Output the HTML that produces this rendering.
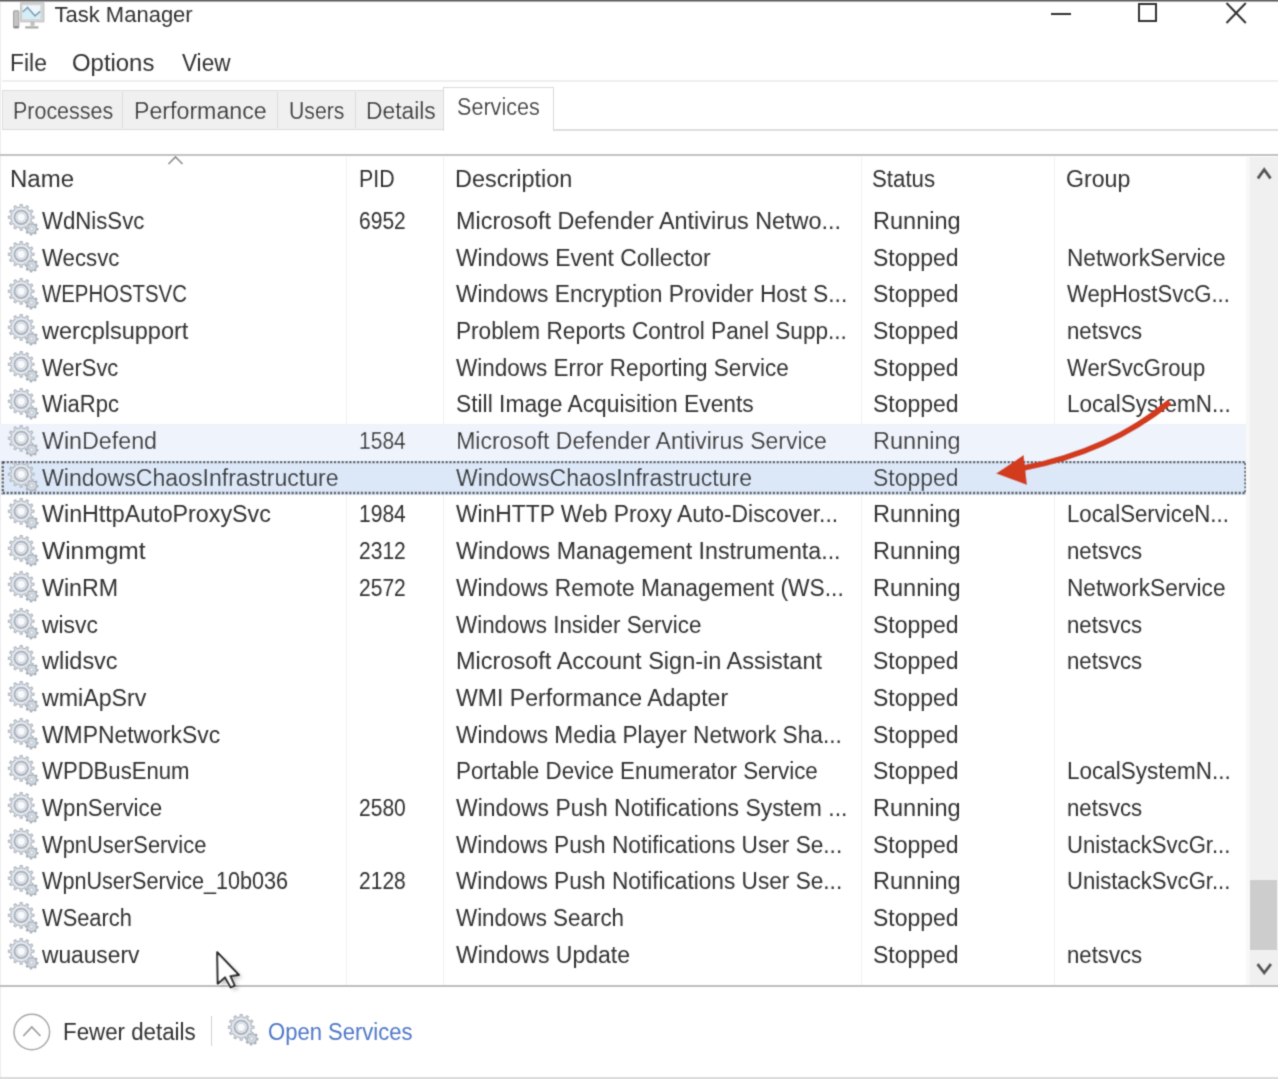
<!DOCTYPE html><html><head><meta charset='utf-8'><style>
*{margin:0;padding:0;box-sizing:border-box}
html,body{width:1278px;height:1079px;overflow:hidden;background:#fff}
body{position:relative;font-family:"Liberation Sans",sans-serif;font-size:22px;color:#1f1f1f}
.t{position:absolute;white-space:nowrap;line-height:23px;font-size:23px;transform-origin:0 0;color:#303030}
.blue{color:#4f77c6}
.abs{position:absolute}
.gear{position:absolute}
</style></head><body><div id="root" style="position:absolute;left:0;top:0;width:1278px;height:1079px;filter:url(#soft)">
<div class="abs" style="left:0;top:0;width:1278px;height:1px;background:#585858"></div>
<div class="abs" style="left:0;top:1px;width:1278px;height:1px;background:#a5a5a5"></div>
<div class="abs" style="left:0;top:2px;width:1.2px;height:1077px;background:#ededed"></div>
<svg class="abs" style="left:8px;top:0" width="40" height="32" viewBox="0 0 40 32">
<rect x="5.6" y="10.8" width="5.2" height="17.2" rx="0.6" fill="#c4c4c4" stroke="#9c9c9c" stroke-width="1"/>
<rect x="6.2" y="26" width="4.2" height="2" fill="#8a8a8a"/>
<rect x="12.7" y="2.8" width="23.2" height="19" fill="#d6d6d6" stroke="#bdbdbd" stroke-width="1"/>
<rect x="14.7" y="5.3" width="17.6" height="13.5" fill="#eef8fc"/>
<path d="M14.7,12 L19.5,7.4 L27,15.8 L32.2,11.4 L32.2,18.8 L14.7,18.8Z" fill="#d3eef8"/>
<path d="M14.7,12 L19.5,7.4 L27,15.8 L32.2,11.4" fill="none" stroke="#7d9db3" stroke-width="1.6"/>
<rect x="22.5" y="21.8" width="4" height="4" fill="#bdbdbd"/>
<rect x="17.2" y="26.3" width="13.2" height="2.2" fill="#a9a9a9"/>
</svg>
<div class="abs" style="left:1051px;top:13px;width:19.5px;height:2.2px;background:#333"></div>
<div class="abs" style="left:1138px;top:3.4px;width:19.3px;height:18.5px;border:2.2px solid #333"></div>
<svg class="abs" style="left:1224px;top:1px" width="24" height="24" viewBox="0 0 24 24"><path d="M2.5,2 L21.8,22 M21.8,2 L2.5,22" stroke="#333" stroke-width="2"/></svg>
<div class="abs" style="left:2px;top:80px;width:1276px;height:2px;background:#efefef"></div>
<div class="abs" style="left:553px;top:129px;width:725px;height:1.5px;background:#dedede"></div>
<div class="abs" style="left:2px;top:90px;width:442px;height:40px;background:#f0f0f0;border-top:1px solid #dedede;border-bottom:1px solid #dadada;border-left:1px solid #dedede"></div>
<div class="abs" style="left:122px;top:92px;width:1px;height:36px;background:#dcdcdc"></div>
<div class="abs" style="left:277px;top:92px;width:1px;height:36px;background:#dcdcdc"></div>
<div class="abs" style="left:355px;top:92px;width:1px;height:36px;background:#dcdcdc"></div>
<div class="abs" style="left:443px;top:87px;width:111px;height:44px;background:#fff;border:1px solid #d9d9d9;border-bottom:none"></div>
<div class="abs" style="left:0;top:153.6px;width:1278px;height:2.6px;background:#c2c2c2"></div>
<svg class="abs" style="left:166px;top:154px" width="20" height="12" viewBox="0 0 20 12"><path d="M2.5,10 L9.5,3 L16.5,10" fill="none" stroke="#8c8c8c" stroke-width="1.6"/></svg>
<div class="abs" style="left:346px;top:157px;width:1px;height:828px;background:#f1f1f1"></div>
<div class="abs" style="left:443px;top:157px;width:1px;height:828px;background:#f1f1f1"></div>
<div class="abs" style="left:861px;top:157px;width:1px;height:828px;background:#f1f1f1"></div>
<div class="abs" style="left:1054px;top:157px;width:1px;height:828px;background:#f1f1f1"></div>
<div class="abs" style="left:0;top:424.0px;width:1246px;height:36.7px;background:#eff3fb"></div>
<div class="abs" style="left:1px;top:460.5px;width:1245px;height:34px;background:#dce8f8"></div>
<svg class="abs" style="left:0;top:0" width="1278" height="1079"><rect x="2.8" y="462.2" width="1242.7" height="30.8" fill="none" stroke="#4d4f55" stroke-width="2.3" stroke-dasharray="2.2 1.65"/></svg>
<div class="abs" style="left:1246px;top:156.5px;width:4px;height:828px;background:#f8f8f8"></div>
<div class="abs" style="left:1250px;top:156.5px;width:28px;height:828px;background:#f0f0f0"></div>
<div class="abs" style="left:1250px;top:880px;width:27px;height:70px;background:#cdcdcd"></div>
<svg class="abs" style="left:1254px;top:164px" width="20" height="18" viewBox="0 0 20 18"><path d="M3.8,14.5 L10.2,5.6 L16.6,14.5" fill="none" stroke="#555" stroke-width="3"/></svg>
<svg class="abs" style="left:1254px;top:958px" width="20" height="18" viewBox="0 0 20 18"><path d="M3.5,6 L10.2,14.8 L17,6" fill="none" stroke="#555" stroke-width="3"/></svg>
<div class="abs" style="left:0;top:984.5px;width:1278px;height:2px;background:#bdbdbd"></div>
<svg class="gear" style="left:6px;top:204.3px" width="34" height="34" viewBox="0 0 34 34"><path d="M30.20,23.22 L30.39,24.29 L31.90,24.54 L31.76,25.91 L30.23,25.86 L29.83,26.87 L29.21,27.77 L30.10,29.01 L29.03,29.89 L27.99,28.76 L26.98,29.20 L25.91,29.39 L25.66,30.90 L24.29,30.76 L24.34,29.23 L23.33,28.83 L22.43,28.21 L21.19,29.10 L20.31,28.03 L21.44,26.99 L21.00,25.98 L20.81,24.91 L19.30,24.66 L19.44,23.29 L20.97,23.34 L21.37,22.33 L21.99,21.43 L21.10,20.19 L22.17,19.31 L23.21,20.44 L24.22,20.00 L25.29,19.81 L25.54,18.30 L26.91,18.44 L26.86,19.97 L27.87,20.37 L28.77,20.99 L30.01,20.10 L30.89,21.17 L29.76,22.21Z" fill="#d6dbe2" stroke="#a5adb7" stroke-width="1.2"/><circle cx="25.6" cy="24.6" r="1.8" fill="#f1f3f6" stroke="#b3bac3" stroke-width="0.8"/><path d="M25.15,10.63 L25.44,12.17 L27.97,12.36 L27.97,14.24 L25.44,14.43 L25.15,15.97 L24.63,17.44 L26.72,18.87 L25.79,20.49 L23.50,19.40 L22.48,20.58 L21.30,21.60 L22.39,23.89 L20.77,24.82 L19.34,22.73 L17.87,23.25 L16.33,23.54 L16.14,26.07 L14.26,26.07 L14.07,23.54 L12.53,23.25 L11.06,22.73 L9.63,24.82 L8.01,23.89 L9.10,21.60 L7.92,20.58 L6.90,19.40 L4.61,20.49 L3.68,18.87 L5.77,17.44 L5.25,15.97 L4.96,14.43 L2.43,14.24 L2.43,12.36 L4.96,12.17 L5.25,10.63 L5.77,9.16 L3.68,7.73 L4.61,6.11 L6.90,7.20 L7.92,6.02 L9.10,5.00 L8.01,2.71 L9.63,1.78 L11.06,3.87 L12.53,3.35 L14.07,3.06 L14.26,0.53 L16.14,0.53 L16.33,3.06 L17.87,3.35 L19.34,3.87 L20.77,1.78 L22.39,2.71 L21.30,5.00 L22.48,6.02 L23.50,7.20 L25.79,6.11 L26.72,7.73 L24.63,9.16Z" fill="#e3e7ed" stroke="#b0b7c1" stroke-width="1.2"/><circle cx="15.2" cy="13.3" r="6.7" fill="#eaedf2" stroke="#a7afba" stroke-width="1.9"/><circle cx="15.2" cy="13.3" r="4.2" fill="#f8fafd" stroke="#c0c6cf" stroke-width="0.8"/></svg>
<svg class="gear" style="left:6px;top:241.0px" width="34" height="34" viewBox="0 0 34 34"><path d="M30.20,23.22 L30.39,24.29 L31.90,24.54 L31.76,25.91 L30.23,25.86 L29.83,26.87 L29.21,27.77 L30.10,29.01 L29.03,29.89 L27.99,28.76 L26.98,29.20 L25.91,29.39 L25.66,30.90 L24.29,30.76 L24.34,29.23 L23.33,28.83 L22.43,28.21 L21.19,29.10 L20.31,28.03 L21.44,26.99 L21.00,25.98 L20.81,24.91 L19.30,24.66 L19.44,23.29 L20.97,23.34 L21.37,22.33 L21.99,21.43 L21.10,20.19 L22.17,19.31 L23.21,20.44 L24.22,20.00 L25.29,19.81 L25.54,18.30 L26.91,18.44 L26.86,19.97 L27.87,20.37 L28.77,20.99 L30.01,20.10 L30.89,21.17 L29.76,22.21Z" fill="#d6dbe2" stroke="#a5adb7" stroke-width="1.2"/><circle cx="25.6" cy="24.6" r="1.8" fill="#f1f3f6" stroke="#b3bac3" stroke-width="0.8"/><path d="M25.15,10.63 L25.44,12.17 L27.97,12.36 L27.97,14.24 L25.44,14.43 L25.15,15.97 L24.63,17.44 L26.72,18.87 L25.79,20.49 L23.50,19.40 L22.48,20.58 L21.30,21.60 L22.39,23.89 L20.77,24.82 L19.34,22.73 L17.87,23.25 L16.33,23.54 L16.14,26.07 L14.26,26.07 L14.07,23.54 L12.53,23.25 L11.06,22.73 L9.63,24.82 L8.01,23.89 L9.10,21.60 L7.92,20.58 L6.90,19.40 L4.61,20.49 L3.68,18.87 L5.77,17.44 L5.25,15.97 L4.96,14.43 L2.43,14.24 L2.43,12.36 L4.96,12.17 L5.25,10.63 L5.77,9.16 L3.68,7.73 L4.61,6.11 L6.90,7.20 L7.92,6.02 L9.10,5.00 L8.01,2.71 L9.63,1.78 L11.06,3.87 L12.53,3.35 L14.07,3.06 L14.26,0.53 L16.14,0.53 L16.33,3.06 L17.87,3.35 L19.34,3.87 L20.77,1.78 L22.39,2.71 L21.30,5.00 L22.48,6.02 L23.50,7.20 L25.79,6.11 L26.72,7.73 L24.63,9.16Z" fill="#e3e7ed" stroke="#b0b7c1" stroke-width="1.2"/><circle cx="15.2" cy="13.3" r="6.7" fill="#eaedf2" stroke="#a7afba" stroke-width="1.9"/><circle cx="15.2" cy="13.3" r="4.2" fill="#f8fafd" stroke="#c0c6cf" stroke-width="0.8"/></svg>
<svg class="gear" style="left:6px;top:277.7px" width="34" height="34" viewBox="0 0 34 34"><path d="M30.20,23.22 L30.39,24.29 L31.90,24.54 L31.76,25.91 L30.23,25.86 L29.83,26.87 L29.21,27.77 L30.10,29.01 L29.03,29.89 L27.99,28.76 L26.98,29.20 L25.91,29.39 L25.66,30.90 L24.29,30.76 L24.34,29.23 L23.33,28.83 L22.43,28.21 L21.19,29.10 L20.31,28.03 L21.44,26.99 L21.00,25.98 L20.81,24.91 L19.30,24.66 L19.44,23.29 L20.97,23.34 L21.37,22.33 L21.99,21.43 L21.10,20.19 L22.17,19.31 L23.21,20.44 L24.22,20.00 L25.29,19.81 L25.54,18.30 L26.91,18.44 L26.86,19.97 L27.87,20.37 L28.77,20.99 L30.01,20.10 L30.89,21.17 L29.76,22.21Z" fill="#d6dbe2" stroke="#a5adb7" stroke-width="1.2"/><circle cx="25.6" cy="24.6" r="1.8" fill="#f1f3f6" stroke="#b3bac3" stroke-width="0.8"/><path d="M25.15,10.63 L25.44,12.17 L27.97,12.36 L27.97,14.24 L25.44,14.43 L25.15,15.97 L24.63,17.44 L26.72,18.87 L25.79,20.49 L23.50,19.40 L22.48,20.58 L21.30,21.60 L22.39,23.89 L20.77,24.82 L19.34,22.73 L17.87,23.25 L16.33,23.54 L16.14,26.07 L14.26,26.07 L14.07,23.54 L12.53,23.25 L11.06,22.73 L9.63,24.82 L8.01,23.89 L9.10,21.60 L7.92,20.58 L6.90,19.40 L4.61,20.49 L3.68,18.87 L5.77,17.44 L5.25,15.97 L4.96,14.43 L2.43,14.24 L2.43,12.36 L4.96,12.17 L5.25,10.63 L5.77,9.16 L3.68,7.73 L4.61,6.11 L6.90,7.20 L7.92,6.02 L9.10,5.00 L8.01,2.71 L9.63,1.78 L11.06,3.87 L12.53,3.35 L14.07,3.06 L14.26,0.53 L16.14,0.53 L16.33,3.06 L17.87,3.35 L19.34,3.87 L20.77,1.78 L22.39,2.71 L21.30,5.00 L22.48,6.02 L23.50,7.20 L25.79,6.11 L26.72,7.73 L24.63,9.16Z" fill="#e3e7ed" stroke="#b0b7c1" stroke-width="1.2"/><circle cx="15.2" cy="13.3" r="6.7" fill="#eaedf2" stroke="#a7afba" stroke-width="1.9"/><circle cx="15.2" cy="13.3" r="4.2" fill="#f8fafd" stroke="#c0c6cf" stroke-width="0.8"/></svg>
<svg class="gear" style="left:6px;top:314.4px" width="34" height="34" viewBox="0 0 34 34"><path d="M30.20,23.22 L30.39,24.29 L31.90,24.54 L31.76,25.91 L30.23,25.86 L29.83,26.87 L29.21,27.77 L30.10,29.01 L29.03,29.89 L27.99,28.76 L26.98,29.20 L25.91,29.39 L25.66,30.90 L24.29,30.76 L24.34,29.23 L23.33,28.83 L22.43,28.21 L21.19,29.10 L20.31,28.03 L21.44,26.99 L21.00,25.98 L20.81,24.91 L19.30,24.66 L19.44,23.29 L20.97,23.34 L21.37,22.33 L21.99,21.43 L21.10,20.19 L22.17,19.31 L23.21,20.44 L24.22,20.00 L25.29,19.81 L25.54,18.30 L26.91,18.44 L26.86,19.97 L27.87,20.37 L28.77,20.99 L30.01,20.10 L30.89,21.17 L29.76,22.21Z" fill="#d6dbe2" stroke="#a5adb7" stroke-width="1.2"/><circle cx="25.6" cy="24.6" r="1.8" fill="#f1f3f6" stroke="#b3bac3" stroke-width="0.8"/><path d="M25.15,10.63 L25.44,12.17 L27.97,12.36 L27.97,14.24 L25.44,14.43 L25.15,15.97 L24.63,17.44 L26.72,18.87 L25.79,20.49 L23.50,19.40 L22.48,20.58 L21.30,21.60 L22.39,23.89 L20.77,24.82 L19.34,22.73 L17.87,23.25 L16.33,23.54 L16.14,26.07 L14.26,26.07 L14.07,23.54 L12.53,23.25 L11.06,22.73 L9.63,24.82 L8.01,23.89 L9.10,21.60 L7.92,20.58 L6.90,19.40 L4.61,20.49 L3.68,18.87 L5.77,17.44 L5.25,15.97 L4.96,14.43 L2.43,14.24 L2.43,12.36 L4.96,12.17 L5.25,10.63 L5.77,9.16 L3.68,7.73 L4.61,6.11 L6.90,7.20 L7.92,6.02 L9.10,5.00 L8.01,2.71 L9.63,1.78 L11.06,3.87 L12.53,3.35 L14.07,3.06 L14.26,0.53 L16.14,0.53 L16.33,3.06 L17.87,3.35 L19.34,3.87 L20.77,1.78 L22.39,2.71 L21.30,5.00 L22.48,6.02 L23.50,7.20 L25.79,6.11 L26.72,7.73 L24.63,9.16Z" fill="#e3e7ed" stroke="#b0b7c1" stroke-width="1.2"/><circle cx="15.2" cy="13.3" r="6.7" fill="#eaedf2" stroke="#a7afba" stroke-width="1.9"/><circle cx="15.2" cy="13.3" r="4.2" fill="#f8fafd" stroke="#c0c6cf" stroke-width="0.8"/></svg>
<svg class="gear" style="left:6px;top:351.1px" width="34" height="34" viewBox="0 0 34 34"><path d="M30.20,23.22 L30.39,24.29 L31.90,24.54 L31.76,25.91 L30.23,25.86 L29.83,26.87 L29.21,27.77 L30.10,29.01 L29.03,29.89 L27.99,28.76 L26.98,29.20 L25.91,29.39 L25.66,30.90 L24.29,30.76 L24.34,29.23 L23.33,28.83 L22.43,28.21 L21.19,29.10 L20.31,28.03 L21.44,26.99 L21.00,25.98 L20.81,24.91 L19.30,24.66 L19.44,23.29 L20.97,23.34 L21.37,22.33 L21.99,21.43 L21.10,20.19 L22.17,19.31 L23.21,20.44 L24.22,20.00 L25.29,19.81 L25.54,18.30 L26.91,18.44 L26.86,19.97 L27.87,20.37 L28.77,20.99 L30.01,20.10 L30.89,21.17 L29.76,22.21Z" fill="#d6dbe2" stroke="#a5adb7" stroke-width="1.2"/><circle cx="25.6" cy="24.6" r="1.8" fill="#f1f3f6" stroke="#b3bac3" stroke-width="0.8"/><path d="M25.15,10.63 L25.44,12.17 L27.97,12.36 L27.97,14.24 L25.44,14.43 L25.15,15.97 L24.63,17.44 L26.72,18.87 L25.79,20.49 L23.50,19.40 L22.48,20.58 L21.30,21.60 L22.39,23.89 L20.77,24.82 L19.34,22.73 L17.87,23.25 L16.33,23.54 L16.14,26.07 L14.26,26.07 L14.07,23.54 L12.53,23.25 L11.06,22.73 L9.63,24.82 L8.01,23.89 L9.10,21.60 L7.92,20.58 L6.90,19.40 L4.61,20.49 L3.68,18.87 L5.77,17.44 L5.25,15.97 L4.96,14.43 L2.43,14.24 L2.43,12.36 L4.96,12.17 L5.25,10.63 L5.77,9.16 L3.68,7.73 L4.61,6.11 L6.90,7.20 L7.92,6.02 L9.10,5.00 L8.01,2.71 L9.63,1.78 L11.06,3.87 L12.53,3.35 L14.07,3.06 L14.26,0.53 L16.14,0.53 L16.33,3.06 L17.87,3.35 L19.34,3.87 L20.77,1.78 L22.39,2.71 L21.30,5.00 L22.48,6.02 L23.50,7.20 L25.79,6.11 L26.72,7.73 L24.63,9.16Z" fill="#e3e7ed" stroke="#b0b7c1" stroke-width="1.2"/><circle cx="15.2" cy="13.3" r="6.7" fill="#eaedf2" stroke="#a7afba" stroke-width="1.9"/><circle cx="15.2" cy="13.3" r="4.2" fill="#f8fafd" stroke="#c0c6cf" stroke-width="0.8"/></svg>
<svg class="gear" style="left:6px;top:387.8px" width="34" height="34" viewBox="0 0 34 34"><path d="M30.20,23.22 L30.39,24.29 L31.90,24.54 L31.76,25.91 L30.23,25.86 L29.83,26.87 L29.21,27.77 L30.10,29.01 L29.03,29.89 L27.99,28.76 L26.98,29.20 L25.91,29.39 L25.66,30.90 L24.29,30.76 L24.34,29.23 L23.33,28.83 L22.43,28.21 L21.19,29.10 L20.31,28.03 L21.44,26.99 L21.00,25.98 L20.81,24.91 L19.30,24.66 L19.44,23.29 L20.97,23.34 L21.37,22.33 L21.99,21.43 L21.10,20.19 L22.17,19.31 L23.21,20.44 L24.22,20.00 L25.29,19.81 L25.54,18.30 L26.91,18.44 L26.86,19.97 L27.87,20.37 L28.77,20.99 L30.01,20.10 L30.89,21.17 L29.76,22.21Z" fill="#d6dbe2" stroke="#a5adb7" stroke-width="1.2"/><circle cx="25.6" cy="24.6" r="1.8" fill="#f1f3f6" stroke="#b3bac3" stroke-width="0.8"/><path d="M25.15,10.63 L25.44,12.17 L27.97,12.36 L27.97,14.24 L25.44,14.43 L25.15,15.97 L24.63,17.44 L26.72,18.87 L25.79,20.49 L23.50,19.40 L22.48,20.58 L21.30,21.60 L22.39,23.89 L20.77,24.82 L19.34,22.73 L17.87,23.25 L16.33,23.54 L16.14,26.07 L14.26,26.07 L14.07,23.54 L12.53,23.25 L11.06,22.73 L9.63,24.82 L8.01,23.89 L9.10,21.60 L7.92,20.58 L6.90,19.40 L4.61,20.49 L3.68,18.87 L5.77,17.44 L5.25,15.97 L4.96,14.43 L2.43,14.24 L2.43,12.36 L4.96,12.17 L5.25,10.63 L5.77,9.16 L3.68,7.73 L4.61,6.11 L6.90,7.20 L7.92,6.02 L9.10,5.00 L8.01,2.71 L9.63,1.78 L11.06,3.87 L12.53,3.35 L14.07,3.06 L14.26,0.53 L16.14,0.53 L16.33,3.06 L17.87,3.35 L19.34,3.87 L20.77,1.78 L22.39,2.71 L21.30,5.00 L22.48,6.02 L23.50,7.20 L25.79,6.11 L26.72,7.73 L24.63,9.16Z" fill="#e3e7ed" stroke="#b0b7c1" stroke-width="1.2"/><circle cx="15.2" cy="13.3" r="6.7" fill="#eaedf2" stroke="#a7afba" stroke-width="1.9"/><circle cx="15.2" cy="13.3" r="4.2" fill="#f8fafd" stroke="#c0c6cf" stroke-width="0.8"/></svg>
<svg class="gear" style="left:6px;top:424.5px" width="34" height="34" viewBox="0 0 34 34"><path d="M30.20,23.22 L30.39,24.29 L31.90,24.54 L31.76,25.91 L30.23,25.86 L29.83,26.87 L29.21,27.77 L30.10,29.01 L29.03,29.89 L27.99,28.76 L26.98,29.20 L25.91,29.39 L25.66,30.90 L24.29,30.76 L24.34,29.23 L23.33,28.83 L22.43,28.21 L21.19,29.10 L20.31,28.03 L21.44,26.99 L21.00,25.98 L20.81,24.91 L19.30,24.66 L19.44,23.29 L20.97,23.34 L21.37,22.33 L21.99,21.43 L21.10,20.19 L22.17,19.31 L23.21,20.44 L24.22,20.00 L25.29,19.81 L25.54,18.30 L26.91,18.44 L26.86,19.97 L27.87,20.37 L28.77,20.99 L30.01,20.10 L30.89,21.17 L29.76,22.21Z" fill="#d6dbe2" stroke="#a5adb7" stroke-width="1.2"/><circle cx="25.6" cy="24.6" r="1.8" fill="#f1f3f6" stroke="#b3bac3" stroke-width="0.8"/><path d="M25.15,10.63 L25.44,12.17 L27.97,12.36 L27.97,14.24 L25.44,14.43 L25.15,15.97 L24.63,17.44 L26.72,18.87 L25.79,20.49 L23.50,19.40 L22.48,20.58 L21.30,21.60 L22.39,23.89 L20.77,24.82 L19.34,22.73 L17.87,23.25 L16.33,23.54 L16.14,26.07 L14.26,26.07 L14.07,23.54 L12.53,23.25 L11.06,22.73 L9.63,24.82 L8.01,23.89 L9.10,21.60 L7.92,20.58 L6.90,19.40 L4.61,20.49 L3.68,18.87 L5.77,17.44 L5.25,15.97 L4.96,14.43 L2.43,14.24 L2.43,12.36 L4.96,12.17 L5.25,10.63 L5.77,9.16 L3.68,7.73 L4.61,6.11 L6.90,7.20 L7.92,6.02 L9.10,5.00 L8.01,2.71 L9.63,1.78 L11.06,3.87 L12.53,3.35 L14.07,3.06 L14.26,0.53 L16.14,0.53 L16.33,3.06 L17.87,3.35 L19.34,3.87 L20.77,1.78 L22.39,2.71 L21.30,5.00 L22.48,6.02 L23.50,7.20 L25.79,6.11 L26.72,7.73 L24.63,9.16Z" fill="#e3e7ed" stroke="#b0b7c1" stroke-width="1.2"/><circle cx="15.2" cy="13.3" r="6.7" fill="#eaedf2" stroke="#a7afba" stroke-width="1.9"/><circle cx="15.2" cy="13.3" r="4.2" fill="#f8fafd" stroke="#c0c6cf" stroke-width="0.8"/></svg>
<svg class="gear" style="left:6px;top:461.2px" width="34" height="34" viewBox="0 0 34 34"><path d="M30.20,23.22 L30.39,24.29 L31.90,24.54 L31.76,25.91 L30.23,25.86 L29.83,26.87 L29.21,27.77 L30.10,29.01 L29.03,29.89 L27.99,28.76 L26.98,29.20 L25.91,29.39 L25.66,30.90 L24.29,30.76 L24.34,29.23 L23.33,28.83 L22.43,28.21 L21.19,29.10 L20.31,28.03 L21.44,26.99 L21.00,25.98 L20.81,24.91 L19.30,24.66 L19.44,23.29 L20.97,23.34 L21.37,22.33 L21.99,21.43 L21.10,20.19 L22.17,19.31 L23.21,20.44 L24.22,20.00 L25.29,19.81 L25.54,18.30 L26.91,18.44 L26.86,19.97 L27.87,20.37 L28.77,20.99 L30.01,20.10 L30.89,21.17 L29.76,22.21Z" fill="#d6dbe2" stroke="#a5adb7" stroke-width="1.2"/><circle cx="25.6" cy="24.6" r="1.8" fill="#f1f3f6" stroke="#b3bac3" stroke-width="0.8"/><path d="M25.15,10.63 L25.44,12.17 L27.97,12.36 L27.97,14.24 L25.44,14.43 L25.15,15.97 L24.63,17.44 L26.72,18.87 L25.79,20.49 L23.50,19.40 L22.48,20.58 L21.30,21.60 L22.39,23.89 L20.77,24.82 L19.34,22.73 L17.87,23.25 L16.33,23.54 L16.14,26.07 L14.26,26.07 L14.07,23.54 L12.53,23.25 L11.06,22.73 L9.63,24.82 L8.01,23.89 L9.10,21.60 L7.92,20.58 L6.90,19.40 L4.61,20.49 L3.68,18.87 L5.77,17.44 L5.25,15.97 L4.96,14.43 L2.43,14.24 L2.43,12.36 L4.96,12.17 L5.25,10.63 L5.77,9.16 L3.68,7.73 L4.61,6.11 L6.90,7.20 L7.92,6.02 L9.10,5.00 L8.01,2.71 L9.63,1.78 L11.06,3.87 L12.53,3.35 L14.07,3.06 L14.26,0.53 L16.14,0.53 L16.33,3.06 L17.87,3.35 L19.34,3.87 L20.77,1.78 L22.39,2.71 L21.30,5.00 L22.48,6.02 L23.50,7.20 L25.79,6.11 L26.72,7.73 L24.63,9.16Z" fill="#e3e7ed" stroke="#b0b7c1" stroke-width="1.2"/><circle cx="15.2" cy="13.3" r="6.7" fill="#eaedf2" stroke="#a7afba" stroke-width="1.9"/><circle cx="15.2" cy="13.3" r="4.2" fill="#f8fafd" stroke="#c0c6cf" stroke-width="0.8"/></svg>
<svg class="gear" style="left:6px;top:497.9px" width="34" height="34" viewBox="0 0 34 34"><path d="M30.20,23.22 L30.39,24.29 L31.90,24.54 L31.76,25.91 L30.23,25.86 L29.83,26.87 L29.21,27.77 L30.10,29.01 L29.03,29.89 L27.99,28.76 L26.98,29.20 L25.91,29.39 L25.66,30.90 L24.29,30.76 L24.34,29.23 L23.33,28.83 L22.43,28.21 L21.19,29.10 L20.31,28.03 L21.44,26.99 L21.00,25.98 L20.81,24.91 L19.30,24.66 L19.44,23.29 L20.97,23.34 L21.37,22.33 L21.99,21.43 L21.10,20.19 L22.17,19.31 L23.21,20.44 L24.22,20.00 L25.29,19.81 L25.54,18.30 L26.91,18.44 L26.86,19.97 L27.87,20.37 L28.77,20.99 L30.01,20.10 L30.89,21.17 L29.76,22.21Z" fill="#d6dbe2" stroke="#a5adb7" stroke-width="1.2"/><circle cx="25.6" cy="24.6" r="1.8" fill="#f1f3f6" stroke="#b3bac3" stroke-width="0.8"/><path d="M25.15,10.63 L25.44,12.17 L27.97,12.36 L27.97,14.24 L25.44,14.43 L25.15,15.97 L24.63,17.44 L26.72,18.87 L25.79,20.49 L23.50,19.40 L22.48,20.58 L21.30,21.60 L22.39,23.89 L20.77,24.82 L19.34,22.73 L17.87,23.25 L16.33,23.54 L16.14,26.07 L14.26,26.07 L14.07,23.54 L12.53,23.25 L11.06,22.73 L9.63,24.82 L8.01,23.89 L9.10,21.60 L7.92,20.58 L6.90,19.40 L4.61,20.49 L3.68,18.87 L5.77,17.44 L5.25,15.97 L4.96,14.43 L2.43,14.24 L2.43,12.36 L4.96,12.17 L5.25,10.63 L5.77,9.16 L3.68,7.73 L4.61,6.11 L6.90,7.20 L7.92,6.02 L9.10,5.00 L8.01,2.71 L9.63,1.78 L11.06,3.87 L12.53,3.35 L14.07,3.06 L14.26,0.53 L16.14,0.53 L16.33,3.06 L17.87,3.35 L19.34,3.87 L20.77,1.78 L22.39,2.71 L21.30,5.00 L22.48,6.02 L23.50,7.20 L25.79,6.11 L26.72,7.73 L24.63,9.16Z" fill="#e3e7ed" stroke="#b0b7c1" stroke-width="1.2"/><circle cx="15.2" cy="13.3" r="6.7" fill="#eaedf2" stroke="#a7afba" stroke-width="1.9"/><circle cx="15.2" cy="13.3" r="4.2" fill="#f8fafd" stroke="#c0c6cf" stroke-width="0.8"/></svg>
<svg class="gear" style="left:6px;top:534.6px" width="34" height="34" viewBox="0 0 34 34"><path d="M30.20,23.22 L30.39,24.29 L31.90,24.54 L31.76,25.91 L30.23,25.86 L29.83,26.87 L29.21,27.77 L30.10,29.01 L29.03,29.89 L27.99,28.76 L26.98,29.20 L25.91,29.39 L25.66,30.90 L24.29,30.76 L24.34,29.23 L23.33,28.83 L22.43,28.21 L21.19,29.10 L20.31,28.03 L21.44,26.99 L21.00,25.98 L20.81,24.91 L19.30,24.66 L19.44,23.29 L20.97,23.34 L21.37,22.33 L21.99,21.43 L21.10,20.19 L22.17,19.31 L23.21,20.44 L24.22,20.00 L25.29,19.81 L25.54,18.30 L26.91,18.44 L26.86,19.97 L27.87,20.37 L28.77,20.99 L30.01,20.10 L30.89,21.17 L29.76,22.21Z" fill="#d6dbe2" stroke="#a5adb7" stroke-width="1.2"/><circle cx="25.6" cy="24.6" r="1.8" fill="#f1f3f6" stroke="#b3bac3" stroke-width="0.8"/><path d="M25.15,10.63 L25.44,12.17 L27.97,12.36 L27.97,14.24 L25.44,14.43 L25.15,15.97 L24.63,17.44 L26.72,18.87 L25.79,20.49 L23.50,19.40 L22.48,20.58 L21.30,21.60 L22.39,23.89 L20.77,24.82 L19.34,22.73 L17.87,23.25 L16.33,23.54 L16.14,26.07 L14.26,26.07 L14.07,23.54 L12.53,23.25 L11.06,22.73 L9.63,24.82 L8.01,23.89 L9.10,21.60 L7.92,20.58 L6.90,19.40 L4.61,20.49 L3.68,18.87 L5.77,17.44 L5.25,15.97 L4.96,14.43 L2.43,14.24 L2.43,12.36 L4.96,12.17 L5.25,10.63 L5.77,9.16 L3.68,7.73 L4.61,6.11 L6.90,7.20 L7.92,6.02 L9.10,5.00 L8.01,2.71 L9.63,1.78 L11.06,3.87 L12.53,3.35 L14.07,3.06 L14.26,0.53 L16.14,0.53 L16.33,3.06 L17.87,3.35 L19.34,3.87 L20.77,1.78 L22.39,2.71 L21.30,5.00 L22.48,6.02 L23.50,7.20 L25.79,6.11 L26.72,7.73 L24.63,9.16Z" fill="#e3e7ed" stroke="#b0b7c1" stroke-width="1.2"/><circle cx="15.2" cy="13.3" r="6.7" fill="#eaedf2" stroke="#a7afba" stroke-width="1.9"/><circle cx="15.2" cy="13.3" r="4.2" fill="#f8fafd" stroke="#c0c6cf" stroke-width="0.8"/></svg>
<svg class="gear" style="left:6px;top:571.3px" width="34" height="34" viewBox="0 0 34 34"><path d="M30.20,23.22 L30.39,24.29 L31.90,24.54 L31.76,25.91 L30.23,25.86 L29.83,26.87 L29.21,27.77 L30.10,29.01 L29.03,29.89 L27.99,28.76 L26.98,29.20 L25.91,29.39 L25.66,30.90 L24.29,30.76 L24.34,29.23 L23.33,28.83 L22.43,28.21 L21.19,29.10 L20.31,28.03 L21.44,26.99 L21.00,25.98 L20.81,24.91 L19.30,24.66 L19.44,23.29 L20.97,23.34 L21.37,22.33 L21.99,21.43 L21.10,20.19 L22.17,19.31 L23.21,20.44 L24.22,20.00 L25.29,19.81 L25.54,18.30 L26.91,18.44 L26.86,19.97 L27.87,20.37 L28.77,20.99 L30.01,20.10 L30.89,21.17 L29.76,22.21Z" fill="#d6dbe2" stroke="#a5adb7" stroke-width="1.2"/><circle cx="25.6" cy="24.6" r="1.8" fill="#f1f3f6" stroke="#b3bac3" stroke-width="0.8"/><path d="M25.15,10.63 L25.44,12.17 L27.97,12.36 L27.97,14.24 L25.44,14.43 L25.15,15.97 L24.63,17.44 L26.72,18.87 L25.79,20.49 L23.50,19.40 L22.48,20.58 L21.30,21.60 L22.39,23.89 L20.77,24.82 L19.34,22.73 L17.87,23.25 L16.33,23.54 L16.14,26.07 L14.26,26.07 L14.07,23.54 L12.53,23.25 L11.06,22.73 L9.63,24.82 L8.01,23.89 L9.10,21.60 L7.92,20.58 L6.90,19.40 L4.61,20.49 L3.68,18.87 L5.77,17.44 L5.25,15.97 L4.96,14.43 L2.43,14.24 L2.43,12.36 L4.96,12.17 L5.25,10.63 L5.77,9.16 L3.68,7.73 L4.61,6.11 L6.90,7.20 L7.92,6.02 L9.10,5.00 L8.01,2.71 L9.63,1.78 L11.06,3.87 L12.53,3.35 L14.07,3.06 L14.26,0.53 L16.14,0.53 L16.33,3.06 L17.87,3.35 L19.34,3.87 L20.77,1.78 L22.39,2.71 L21.30,5.00 L22.48,6.02 L23.50,7.20 L25.79,6.11 L26.72,7.73 L24.63,9.16Z" fill="#e3e7ed" stroke="#b0b7c1" stroke-width="1.2"/><circle cx="15.2" cy="13.3" r="6.7" fill="#eaedf2" stroke="#a7afba" stroke-width="1.9"/><circle cx="15.2" cy="13.3" r="4.2" fill="#f8fafd" stroke="#c0c6cf" stroke-width="0.8"/></svg>
<svg class="gear" style="left:6px;top:608.0px" width="34" height="34" viewBox="0 0 34 34"><path d="M30.20,23.22 L30.39,24.29 L31.90,24.54 L31.76,25.91 L30.23,25.86 L29.83,26.87 L29.21,27.77 L30.10,29.01 L29.03,29.89 L27.99,28.76 L26.98,29.20 L25.91,29.39 L25.66,30.90 L24.29,30.76 L24.34,29.23 L23.33,28.83 L22.43,28.21 L21.19,29.10 L20.31,28.03 L21.44,26.99 L21.00,25.98 L20.81,24.91 L19.30,24.66 L19.44,23.29 L20.97,23.34 L21.37,22.33 L21.99,21.43 L21.10,20.19 L22.17,19.31 L23.21,20.44 L24.22,20.00 L25.29,19.81 L25.54,18.30 L26.91,18.44 L26.86,19.97 L27.87,20.37 L28.77,20.99 L30.01,20.10 L30.89,21.17 L29.76,22.21Z" fill="#d6dbe2" stroke="#a5adb7" stroke-width="1.2"/><circle cx="25.6" cy="24.6" r="1.8" fill="#f1f3f6" stroke="#b3bac3" stroke-width="0.8"/><path d="M25.15,10.63 L25.44,12.17 L27.97,12.36 L27.97,14.24 L25.44,14.43 L25.15,15.97 L24.63,17.44 L26.72,18.87 L25.79,20.49 L23.50,19.40 L22.48,20.58 L21.30,21.60 L22.39,23.89 L20.77,24.82 L19.34,22.73 L17.87,23.25 L16.33,23.54 L16.14,26.07 L14.26,26.07 L14.07,23.54 L12.53,23.25 L11.06,22.73 L9.63,24.82 L8.01,23.89 L9.10,21.60 L7.92,20.58 L6.90,19.40 L4.61,20.49 L3.68,18.87 L5.77,17.44 L5.25,15.97 L4.96,14.43 L2.43,14.24 L2.43,12.36 L4.96,12.17 L5.25,10.63 L5.77,9.16 L3.68,7.73 L4.61,6.11 L6.90,7.20 L7.92,6.02 L9.10,5.00 L8.01,2.71 L9.63,1.78 L11.06,3.87 L12.53,3.35 L14.07,3.06 L14.26,0.53 L16.14,0.53 L16.33,3.06 L17.87,3.35 L19.34,3.87 L20.77,1.78 L22.39,2.71 L21.30,5.00 L22.48,6.02 L23.50,7.20 L25.79,6.11 L26.72,7.73 L24.63,9.16Z" fill="#e3e7ed" stroke="#b0b7c1" stroke-width="1.2"/><circle cx="15.2" cy="13.3" r="6.7" fill="#eaedf2" stroke="#a7afba" stroke-width="1.9"/><circle cx="15.2" cy="13.3" r="4.2" fill="#f8fafd" stroke="#c0c6cf" stroke-width="0.8"/></svg>
<svg class="gear" style="left:6px;top:644.7px" width="34" height="34" viewBox="0 0 34 34"><path d="M30.20,23.22 L30.39,24.29 L31.90,24.54 L31.76,25.91 L30.23,25.86 L29.83,26.87 L29.21,27.77 L30.10,29.01 L29.03,29.89 L27.99,28.76 L26.98,29.20 L25.91,29.39 L25.66,30.90 L24.29,30.76 L24.34,29.23 L23.33,28.83 L22.43,28.21 L21.19,29.10 L20.31,28.03 L21.44,26.99 L21.00,25.98 L20.81,24.91 L19.30,24.66 L19.44,23.29 L20.97,23.34 L21.37,22.33 L21.99,21.43 L21.10,20.19 L22.17,19.31 L23.21,20.44 L24.22,20.00 L25.29,19.81 L25.54,18.30 L26.91,18.44 L26.86,19.97 L27.87,20.37 L28.77,20.99 L30.01,20.10 L30.89,21.17 L29.76,22.21Z" fill="#d6dbe2" stroke="#a5adb7" stroke-width="1.2"/><circle cx="25.6" cy="24.6" r="1.8" fill="#f1f3f6" stroke="#b3bac3" stroke-width="0.8"/><path d="M25.15,10.63 L25.44,12.17 L27.97,12.36 L27.97,14.24 L25.44,14.43 L25.15,15.97 L24.63,17.44 L26.72,18.87 L25.79,20.49 L23.50,19.40 L22.48,20.58 L21.30,21.60 L22.39,23.89 L20.77,24.82 L19.34,22.73 L17.87,23.25 L16.33,23.54 L16.14,26.07 L14.26,26.07 L14.07,23.54 L12.53,23.25 L11.06,22.73 L9.63,24.82 L8.01,23.89 L9.10,21.60 L7.92,20.58 L6.90,19.40 L4.61,20.49 L3.68,18.87 L5.77,17.44 L5.25,15.97 L4.96,14.43 L2.43,14.24 L2.43,12.36 L4.96,12.17 L5.25,10.63 L5.77,9.16 L3.68,7.73 L4.61,6.11 L6.90,7.20 L7.92,6.02 L9.10,5.00 L8.01,2.71 L9.63,1.78 L11.06,3.87 L12.53,3.35 L14.07,3.06 L14.26,0.53 L16.14,0.53 L16.33,3.06 L17.87,3.35 L19.34,3.87 L20.77,1.78 L22.39,2.71 L21.30,5.00 L22.48,6.02 L23.50,7.20 L25.79,6.11 L26.72,7.73 L24.63,9.16Z" fill="#e3e7ed" stroke="#b0b7c1" stroke-width="1.2"/><circle cx="15.2" cy="13.3" r="6.7" fill="#eaedf2" stroke="#a7afba" stroke-width="1.9"/><circle cx="15.2" cy="13.3" r="4.2" fill="#f8fafd" stroke="#c0c6cf" stroke-width="0.8"/></svg>
<svg class="gear" style="left:6px;top:681.4px" width="34" height="34" viewBox="0 0 34 34"><path d="M30.20,23.22 L30.39,24.29 L31.90,24.54 L31.76,25.91 L30.23,25.86 L29.83,26.87 L29.21,27.77 L30.10,29.01 L29.03,29.89 L27.99,28.76 L26.98,29.20 L25.91,29.39 L25.66,30.90 L24.29,30.76 L24.34,29.23 L23.33,28.83 L22.43,28.21 L21.19,29.10 L20.31,28.03 L21.44,26.99 L21.00,25.98 L20.81,24.91 L19.30,24.66 L19.44,23.29 L20.97,23.34 L21.37,22.33 L21.99,21.43 L21.10,20.19 L22.17,19.31 L23.21,20.44 L24.22,20.00 L25.29,19.81 L25.54,18.30 L26.91,18.44 L26.86,19.97 L27.87,20.37 L28.77,20.99 L30.01,20.10 L30.89,21.17 L29.76,22.21Z" fill="#d6dbe2" stroke="#a5adb7" stroke-width="1.2"/><circle cx="25.6" cy="24.6" r="1.8" fill="#f1f3f6" stroke="#b3bac3" stroke-width="0.8"/><path d="M25.15,10.63 L25.44,12.17 L27.97,12.36 L27.97,14.24 L25.44,14.43 L25.15,15.97 L24.63,17.44 L26.72,18.87 L25.79,20.49 L23.50,19.40 L22.48,20.58 L21.30,21.60 L22.39,23.89 L20.77,24.82 L19.34,22.73 L17.87,23.25 L16.33,23.54 L16.14,26.07 L14.26,26.07 L14.07,23.54 L12.53,23.25 L11.06,22.73 L9.63,24.82 L8.01,23.89 L9.10,21.60 L7.92,20.58 L6.90,19.40 L4.61,20.49 L3.68,18.87 L5.77,17.44 L5.25,15.97 L4.96,14.43 L2.43,14.24 L2.43,12.36 L4.96,12.17 L5.25,10.63 L5.77,9.16 L3.68,7.73 L4.61,6.11 L6.90,7.20 L7.92,6.02 L9.10,5.00 L8.01,2.71 L9.63,1.78 L11.06,3.87 L12.53,3.35 L14.07,3.06 L14.26,0.53 L16.14,0.53 L16.33,3.06 L17.87,3.35 L19.34,3.87 L20.77,1.78 L22.39,2.71 L21.30,5.00 L22.48,6.02 L23.50,7.20 L25.79,6.11 L26.72,7.73 L24.63,9.16Z" fill="#e3e7ed" stroke="#b0b7c1" stroke-width="1.2"/><circle cx="15.2" cy="13.3" r="6.7" fill="#eaedf2" stroke="#a7afba" stroke-width="1.9"/><circle cx="15.2" cy="13.3" r="4.2" fill="#f8fafd" stroke="#c0c6cf" stroke-width="0.8"/></svg>
<svg class="gear" style="left:6px;top:718.1px" width="34" height="34" viewBox="0 0 34 34"><path d="M30.20,23.22 L30.39,24.29 L31.90,24.54 L31.76,25.91 L30.23,25.86 L29.83,26.87 L29.21,27.77 L30.10,29.01 L29.03,29.89 L27.99,28.76 L26.98,29.20 L25.91,29.39 L25.66,30.90 L24.29,30.76 L24.34,29.23 L23.33,28.83 L22.43,28.21 L21.19,29.10 L20.31,28.03 L21.44,26.99 L21.00,25.98 L20.81,24.91 L19.30,24.66 L19.44,23.29 L20.97,23.34 L21.37,22.33 L21.99,21.43 L21.10,20.19 L22.17,19.31 L23.21,20.44 L24.22,20.00 L25.29,19.81 L25.54,18.30 L26.91,18.44 L26.86,19.97 L27.87,20.37 L28.77,20.99 L30.01,20.10 L30.89,21.17 L29.76,22.21Z" fill="#d6dbe2" stroke="#a5adb7" stroke-width="1.2"/><circle cx="25.6" cy="24.6" r="1.8" fill="#f1f3f6" stroke="#b3bac3" stroke-width="0.8"/><path d="M25.15,10.63 L25.44,12.17 L27.97,12.36 L27.97,14.24 L25.44,14.43 L25.15,15.97 L24.63,17.44 L26.72,18.87 L25.79,20.49 L23.50,19.40 L22.48,20.58 L21.30,21.60 L22.39,23.89 L20.77,24.82 L19.34,22.73 L17.87,23.25 L16.33,23.54 L16.14,26.07 L14.26,26.07 L14.07,23.54 L12.53,23.25 L11.06,22.73 L9.63,24.82 L8.01,23.89 L9.10,21.60 L7.92,20.58 L6.90,19.40 L4.61,20.49 L3.68,18.87 L5.77,17.44 L5.25,15.97 L4.96,14.43 L2.43,14.24 L2.43,12.36 L4.96,12.17 L5.25,10.63 L5.77,9.16 L3.68,7.73 L4.61,6.11 L6.90,7.20 L7.92,6.02 L9.10,5.00 L8.01,2.71 L9.63,1.78 L11.06,3.87 L12.53,3.35 L14.07,3.06 L14.26,0.53 L16.14,0.53 L16.33,3.06 L17.87,3.35 L19.34,3.87 L20.77,1.78 L22.39,2.71 L21.30,5.00 L22.48,6.02 L23.50,7.20 L25.79,6.11 L26.72,7.73 L24.63,9.16Z" fill="#e3e7ed" stroke="#b0b7c1" stroke-width="1.2"/><circle cx="15.2" cy="13.3" r="6.7" fill="#eaedf2" stroke="#a7afba" stroke-width="1.9"/><circle cx="15.2" cy="13.3" r="4.2" fill="#f8fafd" stroke="#c0c6cf" stroke-width="0.8"/></svg>
<svg class="gear" style="left:6px;top:754.8px" width="34" height="34" viewBox="0 0 34 34"><path d="M30.20,23.22 L30.39,24.29 L31.90,24.54 L31.76,25.91 L30.23,25.86 L29.83,26.87 L29.21,27.77 L30.10,29.01 L29.03,29.89 L27.99,28.76 L26.98,29.20 L25.91,29.39 L25.66,30.90 L24.29,30.76 L24.34,29.23 L23.33,28.83 L22.43,28.21 L21.19,29.10 L20.31,28.03 L21.44,26.99 L21.00,25.98 L20.81,24.91 L19.30,24.66 L19.44,23.29 L20.97,23.34 L21.37,22.33 L21.99,21.43 L21.10,20.19 L22.17,19.31 L23.21,20.44 L24.22,20.00 L25.29,19.81 L25.54,18.30 L26.91,18.44 L26.86,19.97 L27.87,20.37 L28.77,20.99 L30.01,20.10 L30.89,21.17 L29.76,22.21Z" fill="#d6dbe2" stroke="#a5adb7" stroke-width="1.2"/><circle cx="25.6" cy="24.6" r="1.8" fill="#f1f3f6" stroke="#b3bac3" stroke-width="0.8"/><path d="M25.15,10.63 L25.44,12.17 L27.97,12.36 L27.97,14.24 L25.44,14.43 L25.15,15.97 L24.63,17.44 L26.72,18.87 L25.79,20.49 L23.50,19.40 L22.48,20.58 L21.30,21.60 L22.39,23.89 L20.77,24.82 L19.34,22.73 L17.87,23.25 L16.33,23.54 L16.14,26.07 L14.26,26.07 L14.07,23.54 L12.53,23.25 L11.06,22.73 L9.63,24.82 L8.01,23.89 L9.10,21.60 L7.92,20.58 L6.90,19.40 L4.61,20.49 L3.68,18.87 L5.77,17.44 L5.25,15.97 L4.96,14.43 L2.43,14.24 L2.43,12.36 L4.96,12.17 L5.25,10.63 L5.77,9.16 L3.68,7.73 L4.61,6.11 L6.90,7.20 L7.92,6.02 L9.10,5.00 L8.01,2.71 L9.63,1.78 L11.06,3.87 L12.53,3.35 L14.07,3.06 L14.26,0.53 L16.14,0.53 L16.33,3.06 L17.87,3.35 L19.34,3.87 L20.77,1.78 L22.39,2.71 L21.30,5.00 L22.48,6.02 L23.50,7.20 L25.79,6.11 L26.72,7.73 L24.63,9.16Z" fill="#e3e7ed" stroke="#b0b7c1" stroke-width="1.2"/><circle cx="15.2" cy="13.3" r="6.7" fill="#eaedf2" stroke="#a7afba" stroke-width="1.9"/><circle cx="15.2" cy="13.3" r="4.2" fill="#f8fafd" stroke="#c0c6cf" stroke-width="0.8"/></svg>
<svg class="gear" style="left:6px;top:791.5px" width="34" height="34" viewBox="0 0 34 34"><path d="M30.20,23.22 L30.39,24.29 L31.90,24.54 L31.76,25.91 L30.23,25.86 L29.83,26.87 L29.21,27.77 L30.10,29.01 L29.03,29.89 L27.99,28.76 L26.98,29.20 L25.91,29.39 L25.66,30.90 L24.29,30.76 L24.34,29.23 L23.33,28.83 L22.43,28.21 L21.19,29.10 L20.31,28.03 L21.44,26.99 L21.00,25.98 L20.81,24.91 L19.30,24.66 L19.44,23.29 L20.97,23.34 L21.37,22.33 L21.99,21.43 L21.10,20.19 L22.17,19.31 L23.21,20.44 L24.22,20.00 L25.29,19.81 L25.54,18.30 L26.91,18.44 L26.86,19.97 L27.87,20.37 L28.77,20.99 L30.01,20.10 L30.89,21.17 L29.76,22.21Z" fill="#d6dbe2" stroke="#a5adb7" stroke-width="1.2"/><circle cx="25.6" cy="24.6" r="1.8" fill="#f1f3f6" stroke="#b3bac3" stroke-width="0.8"/><path d="M25.15,10.63 L25.44,12.17 L27.97,12.36 L27.97,14.24 L25.44,14.43 L25.15,15.97 L24.63,17.44 L26.72,18.87 L25.79,20.49 L23.50,19.40 L22.48,20.58 L21.30,21.60 L22.39,23.89 L20.77,24.82 L19.34,22.73 L17.87,23.25 L16.33,23.54 L16.14,26.07 L14.26,26.07 L14.07,23.54 L12.53,23.25 L11.06,22.73 L9.63,24.82 L8.01,23.89 L9.10,21.60 L7.92,20.58 L6.90,19.40 L4.61,20.49 L3.68,18.87 L5.77,17.44 L5.25,15.97 L4.96,14.43 L2.43,14.24 L2.43,12.36 L4.96,12.17 L5.25,10.63 L5.77,9.16 L3.68,7.73 L4.61,6.11 L6.90,7.20 L7.92,6.02 L9.10,5.00 L8.01,2.71 L9.63,1.78 L11.06,3.87 L12.53,3.35 L14.07,3.06 L14.26,0.53 L16.14,0.53 L16.33,3.06 L17.87,3.35 L19.34,3.87 L20.77,1.78 L22.39,2.71 L21.30,5.00 L22.48,6.02 L23.50,7.20 L25.79,6.11 L26.72,7.73 L24.63,9.16Z" fill="#e3e7ed" stroke="#b0b7c1" stroke-width="1.2"/><circle cx="15.2" cy="13.3" r="6.7" fill="#eaedf2" stroke="#a7afba" stroke-width="1.9"/><circle cx="15.2" cy="13.3" r="4.2" fill="#f8fafd" stroke="#c0c6cf" stroke-width="0.8"/></svg>
<svg class="gear" style="left:6px;top:828.2px" width="34" height="34" viewBox="0 0 34 34"><path d="M30.20,23.22 L30.39,24.29 L31.90,24.54 L31.76,25.91 L30.23,25.86 L29.83,26.87 L29.21,27.77 L30.10,29.01 L29.03,29.89 L27.99,28.76 L26.98,29.20 L25.91,29.39 L25.66,30.90 L24.29,30.76 L24.34,29.23 L23.33,28.83 L22.43,28.21 L21.19,29.10 L20.31,28.03 L21.44,26.99 L21.00,25.98 L20.81,24.91 L19.30,24.66 L19.44,23.29 L20.97,23.34 L21.37,22.33 L21.99,21.43 L21.10,20.19 L22.17,19.31 L23.21,20.44 L24.22,20.00 L25.29,19.81 L25.54,18.30 L26.91,18.44 L26.86,19.97 L27.87,20.37 L28.77,20.99 L30.01,20.10 L30.89,21.17 L29.76,22.21Z" fill="#d6dbe2" stroke="#a5adb7" stroke-width="1.2"/><circle cx="25.6" cy="24.6" r="1.8" fill="#f1f3f6" stroke="#b3bac3" stroke-width="0.8"/><path d="M25.15,10.63 L25.44,12.17 L27.97,12.36 L27.97,14.24 L25.44,14.43 L25.15,15.97 L24.63,17.44 L26.72,18.87 L25.79,20.49 L23.50,19.40 L22.48,20.58 L21.30,21.60 L22.39,23.89 L20.77,24.82 L19.34,22.73 L17.87,23.25 L16.33,23.54 L16.14,26.07 L14.26,26.07 L14.07,23.54 L12.53,23.25 L11.06,22.73 L9.63,24.82 L8.01,23.89 L9.10,21.60 L7.92,20.58 L6.90,19.40 L4.61,20.49 L3.68,18.87 L5.77,17.44 L5.25,15.97 L4.96,14.43 L2.43,14.24 L2.43,12.36 L4.96,12.17 L5.25,10.63 L5.77,9.16 L3.68,7.73 L4.61,6.11 L6.90,7.20 L7.92,6.02 L9.10,5.00 L8.01,2.71 L9.63,1.78 L11.06,3.87 L12.53,3.35 L14.07,3.06 L14.26,0.53 L16.14,0.53 L16.33,3.06 L17.87,3.35 L19.34,3.87 L20.77,1.78 L22.39,2.71 L21.30,5.00 L22.48,6.02 L23.50,7.20 L25.79,6.11 L26.72,7.73 L24.63,9.16Z" fill="#e3e7ed" stroke="#b0b7c1" stroke-width="1.2"/><circle cx="15.2" cy="13.3" r="6.7" fill="#eaedf2" stroke="#a7afba" stroke-width="1.9"/><circle cx="15.2" cy="13.3" r="4.2" fill="#f8fafd" stroke="#c0c6cf" stroke-width="0.8"/></svg>
<svg class="gear" style="left:6px;top:864.9px" width="34" height="34" viewBox="0 0 34 34"><path d="M30.20,23.22 L30.39,24.29 L31.90,24.54 L31.76,25.91 L30.23,25.86 L29.83,26.87 L29.21,27.77 L30.10,29.01 L29.03,29.89 L27.99,28.76 L26.98,29.20 L25.91,29.39 L25.66,30.90 L24.29,30.76 L24.34,29.23 L23.33,28.83 L22.43,28.21 L21.19,29.10 L20.31,28.03 L21.44,26.99 L21.00,25.98 L20.81,24.91 L19.30,24.66 L19.44,23.29 L20.97,23.34 L21.37,22.33 L21.99,21.43 L21.10,20.19 L22.17,19.31 L23.21,20.44 L24.22,20.00 L25.29,19.81 L25.54,18.30 L26.91,18.44 L26.86,19.97 L27.87,20.37 L28.77,20.99 L30.01,20.10 L30.89,21.17 L29.76,22.21Z" fill="#d6dbe2" stroke="#a5adb7" stroke-width="1.2"/><circle cx="25.6" cy="24.6" r="1.8" fill="#f1f3f6" stroke="#b3bac3" stroke-width="0.8"/><path d="M25.15,10.63 L25.44,12.17 L27.97,12.36 L27.97,14.24 L25.44,14.43 L25.15,15.97 L24.63,17.44 L26.72,18.87 L25.79,20.49 L23.50,19.40 L22.48,20.58 L21.30,21.60 L22.39,23.89 L20.77,24.82 L19.34,22.73 L17.87,23.25 L16.33,23.54 L16.14,26.07 L14.26,26.07 L14.07,23.54 L12.53,23.25 L11.06,22.73 L9.63,24.82 L8.01,23.89 L9.10,21.60 L7.92,20.58 L6.90,19.40 L4.61,20.49 L3.68,18.87 L5.77,17.44 L5.25,15.97 L4.96,14.43 L2.43,14.24 L2.43,12.36 L4.96,12.17 L5.25,10.63 L5.77,9.16 L3.68,7.73 L4.61,6.11 L6.90,7.20 L7.92,6.02 L9.10,5.00 L8.01,2.71 L9.63,1.78 L11.06,3.87 L12.53,3.35 L14.07,3.06 L14.26,0.53 L16.14,0.53 L16.33,3.06 L17.87,3.35 L19.34,3.87 L20.77,1.78 L22.39,2.71 L21.30,5.00 L22.48,6.02 L23.50,7.20 L25.79,6.11 L26.72,7.73 L24.63,9.16Z" fill="#e3e7ed" stroke="#b0b7c1" stroke-width="1.2"/><circle cx="15.2" cy="13.3" r="6.7" fill="#eaedf2" stroke="#a7afba" stroke-width="1.9"/><circle cx="15.2" cy="13.3" r="4.2" fill="#f8fafd" stroke="#c0c6cf" stroke-width="0.8"/></svg>
<svg class="gear" style="left:6px;top:901.6px" width="34" height="34" viewBox="0 0 34 34"><path d="M30.20,23.22 L30.39,24.29 L31.90,24.54 L31.76,25.91 L30.23,25.86 L29.83,26.87 L29.21,27.77 L30.10,29.01 L29.03,29.89 L27.99,28.76 L26.98,29.20 L25.91,29.39 L25.66,30.90 L24.29,30.76 L24.34,29.23 L23.33,28.83 L22.43,28.21 L21.19,29.10 L20.31,28.03 L21.44,26.99 L21.00,25.98 L20.81,24.91 L19.30,24.66 L19.44,23.29 L20.97,23.34 L21.37,22.33 L21.99,21.43 L21.10,20.19 L22.17,19.31 L23.21,20.44 L24.22,20.00 L25.29,19.81 L25.54,18.30 L26.91,18.44 L26.86,19.97 L27.87,20.37 L28.77,20.99 L30.01,20.10 L30.89,21.17 L29.76,22.21Z" fill="#d6dbe2" stroke="#a5adb7" stroke-width="1.2"/><circle cx="25.6" cy="24.6" r="1.8" fill="#f1f3f6" stroke="#b3bac3" stroke-width="0.8"/><path d="M25.15,10.63 L25.44,12.17 L27.97,12.36 L27.97,14.24 L25.44,14.43 L25.15,15.97 L24.63,17.44 L26.72,18.87 L25.79,20.49 L23.50,19.40 L22.48,20.58 L21.30,21.60 L22.39,23.89 L20.77,24.82 L19.34,22.73 L17.87,23.25 L16.33,23.54 L16.14,26.07 L14.26,26.07 L14.07,23.54 L12.53,23.25 L11.06,22.73 L9.63,24.82 L8.01,23.89 L9.10,21.60 L7.92,20.58 L6.90,19.40 L4.61,20.49 L3.68,18.87 L5.77,17.44 L5.25,15.97 L4.96,14.43 L2.43,14.24 L2.43,12.36 L4.96,12.17 L5.25,10.63 L5.77,9.16 L3.68,7.73 L4.61,6.11 L6.90,7.20 L7.92,6.02 L9.10,5.00 L8.01,2.71 L9.63,1.78 L11.06,3.87 L12.53,3.35 L14.07,3.06 L14.26,0.53 L16.14,0.53 L16.33,3.06 L17.87,3.35 L19.34,3.87 L20.77,1.78 L22.39,2.71 L21.30,5.00 L22.48,6.02 L23.50,7.20 L25.79,6.11 L26.72,7.73 L24.63,9.16Z" fill="#e3e7ed" stroke="#b0b7c1" stroke-width="1.2"/><circle cx="15.2" cy="13.3" r="6.7" fill="#eaedf2" stroke="#a7afba" stroke-width="1.9"/><circle cx="15.2" cy="13.3" r="4.2" fill="#f8fafd" stroke="#c0c6cf" stroke-width="0.8"/></svg>
<svg class="gear" style="left:6px;top:938.3px" width="34" height="34" viewBox="0 0 34 34"><path d="M30.20,23.22 L30.39,24.29 L31.90,24.54 L31.76,25.91 L30.23,25.86 L29.83,26.87 L29.21,27.77 L30.10,29.01 L29.03,29.89 L27.99,28.76 L26.98,29.20 L25.91,29.39 L25.66,30.90 L24.29,30.76 L24.34,29.23 L23.33,28.83 L22.43,28.21 L21.19,29.10 L20.31,28.03 L21.44,26.99 L21.00,25.98 L20.81,24.91 L19.30,24.66 L19.44,23.29 L20.97,23.34 L21.37,22.33 L21.99,21.43 L21.10,20.19 L22.17,19.31 L23.21,20.44 L24.22,20.00 L25.29,19.81 L25.54,18.30 L26.91,18.44 L26.86,19.97 L27.87,20.37 L28.77,20.99 L30.01,20.10 L30.89,21.17 L29.76,22.21Z" fill="#d6dbe2" stroke="#a5adb7" stroke-width="1.2"/><circle cx="25.6" cy="24.6" r="1.8" fill="#f1f3f6" stroke="#b3bac3" stroke-width="0.8"/><path d="M25.15,10.63 L25.44,12.17 L27.97,12.36 L27.97,14.24 L25.44,14.43 L25.15,15.97 L24.63,17.44 L26.72,18.87 L25.79,20.49 L23.50,19.40 L22.48,20.58 L21.30,21.60 L22.39,23.89 L20.77,24.82 L19.34,22.73 L17.87,23.25 L16.33,23.54 L16.14,26.07 L14.26,26.07 L14.07,23.54 L12.53,23.25 L11.06,22.73 L9.63,24.82 L8.01,23.89 L9.10,21.60 L7.92,20.58 L6.90,19.40 L4.61,20.49 L3.68,18.87 L5.77,17.44 L5.25,15.97 L4.96,14.43 L2.43,14.24 L2.43,12.36 L4.96,12.17 L5.25,10.63 L5.77,9.16 L3.68,7.73 L4.61,6.11 L6.90,7.20 L7.92,6.02 L9.10,5.00 L8.01,2.71 L9.63,1.78 L11.06,3.87 L12.53,3.35 L14.07,3.06 L14.26,0.53 L16.14,0.53 L16.33,3.06 L17.87,3.35 L19.34,3.87 L20.77,1.78 L22.39,2.71 L21.30,5.00 L22.48,6.02 L23.50,7.20 L25.79,6.11 L26.72,7.73 L24.63,9.16Z" fill="#e3e7ed" stroke="#b0b7c1" stroke-width="1.2"/><circle cx="15.2" cy="13.3" r="6.7" fill="#eaedf2" stroke="#a7afba" stroke-width="1.9"/><circle cx="15.2" cy="13.3" r="4.2" fill="#f8fafd" stroke="#c0c6cf" stroke-width="0.8"/></svg>
<svg class="abs" style="left:12px;top:1012px" width="40" height="40" viewBox="0 0 40 40"><circle cx="19.8" cy="20" r="17.8" fill="none" stroke="#a8a8a8" stroke-width="1.5"/><path d="M11.3,24 L19.8,15 L28.4,24" fill="none" stroke="#9a9a9a" stroke-width="1.6"/></svg>
<div class="abs" style="left:211px;top:1016px;width:1px;height:30px;background:#d0d0d0"></div>
<svg class="gear" style="left:226px;top:1014px" width="34" height="34" viewBox="0 0 34 34"><path d="M30.20,23.22 L30.39,24.29 L31.90,24.54 L31.76,25.91 L30.23,25.86 L29.83,26.87 L29.21,27.77 L30.10,29.01 L29.03,29.89 L27.99,28.76 L26.98,29.20 L25.91,29.39 L25.66,30.90 L24.29,30.76 L24.34,29.23 L23.33,28.83 L22.43,28.21 L21.19,29.10 L20.31,28.03 L21.44,26.99 L21.00,25.98 L20.81,24.91 L19.30,24.66 L19.44,23.29 L20.97,23.34 L21.37,22.33 L21.99,21.43 L21.10,20.19 L22.17,19.31 L23.21,20.44 L24.22,20.00 L25.29,19.81 L25.54,18.30 L26.91,18.44 L26.86,19.97 L27.87,20.37 L28.77,20.99 L30.01,20.10 L30.89,21.17 L29.76,22.21Z" fill="#d6dbe2" stroke="#a5adb7" stroke-width="1.2"/><circle cx="25.6" cy="24.6" r="1.8" fill="#f1f3f6" stroke="#b3bac3" stroke-width="0.8"/><path d="M25.15,10.63 L25.44,12.17 L27.97,12.36 L27.97,14.24 L25.44,14.43 L25.15,15.97 L24.63,17.44 L26.72,18.87 L25.79,20.49 L23.50,19.40 L22.48,20.58 L21.30,21.60 L22.39,23.89 L20.77,24.82 L19.34,22.73 L17.87,23.25 L16.33,23.54 L16.14,26.07 L14.26,26.07 L14.07,23.54 L12.53,23.25 L11.06,22.73 L9.63,24.82 L8.01,23.89 L9.10,21.60 L7.92,20.58 L6.90,19.40 L4.61,20.49 L3.68,18.87 L5.77,17.44 L5.25,15.97 L4.96,14.43 L2.43,14.24 L2.43,12.36 L4.96,12.17 L5.25,10.63 L5.77,9.16 L3.68,7.73 L4.61,6.11 L6.90,7.20 L7.92,6.02 L9.10,5.00 L8.01,2.71 L9.63,1.78 L11.06,3.87 L12.53,3.35 L14.07,3.06 L14.26,0.53 L16.14,0.53 L16.33,3.06 L17.87,3.35 L19.34,3.87 L20.77,1.78 L22.39,2.71 L21.30,5.00 L22.48,6.02 L23.50,7.20 L25.79,6.11 L26.72,7.73 L24.63,9.16Z" fill="#e3e7ed" stroke="#b0b7c1" stroke-width="1.2"/><circle cx="15.2" cy="13.3" r="6.7" fill="#eaedf2" stroke="#a7afba" stroke-width="1.9"/><circle cx="15.2" cy="13.3" r="4.2" fill="#f8fafd" stroke="#c0c6cf" stroke-width="0.8"/></svg>
<div class="abs" style="left:0;top:1077px;width:1278px;height:2px;background:#dcdcdc"></div>
<span id="t0" class="t" style="left:54.50px;top:3.58px;font-size:22px;line-height:22px;">Task Manager</span>
<span id="t1" class="t" style="left:9.91px;top:52.23px;transform:scaleX(0.9941);">File</span>
<span id="t2" class="t" style="left:72.44px;top:52.23px;transform:scaleX(1.0390);">Options</span>
<span id="t3" class="t" style="left:181.51px;top:52.23px;transform:scaleX(0.9796);">View</span>
<span id="t4" class="t" style="left:12.63px;top:100.03px;transform:scaleX(0.9327);">Processes</span>
<span id="t5" class="t" style="left:134.49px;top:100.03px;transform:scaleX(1.0078);">Performance</span>
<span id="t6" class="t" style="left:288.66px;top:100.03px;transform:scaleX(0.9211);">Users</span>
<span id="t7" class="t" style="left:365.51px;top:100.03px;transform:scaleX(0.9925);">Details</span>
<span id="t8" class="t" style="left:457.17px;top:96.33px;transform:scaleX(0.9384);">Services</span>
<span id="t9" class="t" style="left:10.43px;top:167.53px;transform:scaleX(1.0441);">Name</span>
<span id="t10" class="t" style="left:358.61px;top:167.53px;transform:scaleX(0.9278);">PID</span>
<span id="t11" class="t" style="left:454.87px;top:167.53px;transform:scaleX(1.0187);">Description</span>
<span id="t12" class="t" style="left:871.94px;top:167.53px;transform:scaleX(0.9683);">Status</span>
<span id="t13" class="t" style="left:1065.89px;top:167.53px;transform:scaleX(1.0065);">Group</span>
<span id="t14" class="t" style="left:42.40px;top:209.83px;transform:scaleX(0.9652);">WdNisSvc</span>
<span id="t15" class="t" style="left:359.30px;top:209.83px;transform:scaleX(0.9140);">6952</span>
<span id="t16" class="t" style="left:456.20px;top:209.83px;transform:scaleX(1.0176);">Microsoft Defender Antivirus Netwo...</span>
<span id="t17" class="t" style="left:872.90px;top:209.83px;transform:scaleX(1.0226);">Running</span>
<span id="t18" class="t" style="left:42.40px;top:246.53px;transform:scaleX(0.9671);">Wecsvc</span>
<span id="t19" class="t" style="left:456.20px;top:246.53px;transform:scaleX(0.9961);">Windows Event Collector</span>
<span id="t20" class="t" style="left:872.90px;top:246.53px;transform:scaleX(0.9988);">Stopped</span>
<span id="t21" class="t" style="left:1066.50px;top:246.53px;transform:scaleX(0.9844);">NetworkService</span>
<span id="t22" class="t" style="left:42.40px;top:283.23px;transform:scaleX(0.8858);">WEPHOSTSVC</span>
<span id="t23" class="t" style="left:456.20px;top:283.23px;transform:scaleX(0.9906);">Windows Encryption Provider Host S...</span>
<span id="t24" class="t" style="left:872.90px;top:283.23px;transform:scaleX(0.9988);">Stopped</span>
<span id="t25" class="t" style="left:1066.50px;top:283.23px;transform:scaleX(0.9601);">WepHostSvcG...</span>
<span id="t26" class="t" style="left:42.40px;top:319.93px;transform:scaleX(1.0224);">wercplsupport</span>
<span id="t27" class="t" style="left:456.20px;top:319.93px;transform:scaleX(0.9831);">Problem Reports Control Panel Supp...</span>
<span id="t28" class="t" style="left:872.90px;top:319.93px;transform:scaleX(0.9988);">Stopped</span>
<span id="t29" class="t" style="left:1066.50px;top:319.93px;transform:scaleX(0.9636);">netsvcs</span>
<span id="t30" class="t" style="left:42.40px;top:356.63px;transform:scaleX(0.9532);">WerSvc</span>
<span id="t31" class="t" style="left:456.20px;top:356.63px;transform:scaleX(0.9788);">Windows Error Reporting Service</span>
<span id="t32" class="t" style="left:872.90px;top:356.63px;transform:scaleX(0.9988);">Stopped</span>
<span id="t33" class="t" style="left:1066.50px;top:356.63px;transform:scaleX(0.9594);">WerSvcGroup</span>
<span id="t34" class="t" style="left:42.40px;top:393.33px;transform:scaleX(0.9550);">WiaRpc</span>
<span id="t35" class="t" style="left:456.20px;top:393.33px;transform:scaleX(0.9910);">Still Image Acquisition Events</span>
<span id="t36" class="t" style="left:872.90px;top:393.33px;transform:scaleX(0.9988);">Stopped</span>
<span id="t37" class="t" style="left:1066.50px;top:393.33px;transform:scaleX(0.9776);">LocalSystemN...</span>
<span id="t38" class="t" style="left:42.40px;top:430.03px;transform:scaleX(1.0107);">WinDefend</span>
<span id="t39" class="t" style="left:359.30px;top:430.03px;transform:scaleX(0.9140);">1584</span>
<span id="t40" class="t" style="left:456.20px;top:430.03px;">Microsoft Defender Antivirus Service</span>
<span id="t41" class="t" style="left:872.90px;top:430.03px;transform:scaleX(1.0226);">Running</span>
<span id="t42" class="t" style="left:42.40px;top:466.73px;transform:scaleX(1.0044);">WindowsChaosInfrastructure</span>
<span id="t43" class="t" style="left:456.20px;top:466.73px;transform:scaleX(1.0027);">WindowsChaosInfrastructure</span>
<span id="t44" class="t" style="left:872.90px;top:466.73px;transform:scaleX(0.9988);">Stopped</span>
<span id="t45" class="t" style="left:42.40px;top:503.43px;transform:scaleX(1.0115);">WinHttpAutoProxySvc</span>
<span id="t46" class="t" style="left:359.30px;top:503.43px;transform:scaleX(0.9140);">1984</span>
<span id="t47" class="t" style="left:456.20px;top:503.43px;transform:scaleX(0.9922);">WinHTTP Web Proxy Auto-Discover...</span>
<span id="t48" class="t" style="left:872.90px;top:503.43px;transform:scaleX(1.0226);">Running</span>
<span id="t49" class="t" style="left:1066.50px;top:503.43px;transform:scaleX(0.9667);">LocalServiceN...</span>
<span id="t50" class="t" style="left:42.40px;top:540.13px;transform:scaleX(1.0670);">Winmgmt</span>
<span id="t51" class="t" style="left:359.30px;top:540.13px;transform:scaleX(0.9140);">2312</span>
<span id="t52" class="t" style="left:456.20px;top:540.13px;transform:scaleX(1.0095);">Windows Management Instrumenta...</span>
<span id="t53" class="t" style="left:872.90px;top:540.13px;transform:scaleX(1.0226);">Running</span>
<span id="t54" class="t" style="left:1066.50px;top:540.13px;transform:scaleX(0.9636);">netsvcs</span>
<span id="t55" class="t" style="left:42.40px;top:576.83px;transform:scaleX(1.0108);">WinRM</span>
<span id="t56" class="t" style="left:359.30px;top:576.83px;transform:scaleX(0.9140);">2572</span>
<span id="t57" class="t" style="left:456.20px;top:576.83px;transform:scaleX(0.9913);">Windows Remote Management (WS...</span>
<span id="t58" class="t" style="left:872.90px;top:576.83px;transform:scaleX(1.0226);">Running</span>
<span id="t59" class="t" style="left:1066.50px;top:576.83px;transform:scaleX(0.9844);">NetworkService</span>
<span id="t60" class="t" style="left:42.40px;top:613.53px;transform:scaleX(0.9946);">wisvc</span>
<span id="t61" class="t" style="left:456.20px;top:613.53px;transform:scaleX(0.9745);">Windows Insider Service</span>
<span id="t62" class="t" style="left:872.90px;top:613.53px;transform:scaleX(0.9988);">Stopped</span>
<span id="t63" class="t" style="left:1066.50px;top:613.53px;transform:scaleX(0.9636);">netsvcs</span>
<span id="t64" class="t" style="left:42.40px;top:650.23px;transform:scaleX(1.0192);">wlidsvc</span>
<span id="t65" class="t" style="left:456.20px;top:650.23px;transform:scaleX(1.0226);">Microsoft Account Sign-in Assistant</span>
<span id="t66" class="t" style="left:872.90px;top:650.23px;transform:scaleX(0.9988);">Stopped</span>
<span id="t67" class="t" style="left:1066.50px;top:650.23px;transform:scaleX(0.9636);">netsvcs</span>
<span id="t68" class="t" style="left:42.40px;top:686.93px;transform:scaleX(1.0087);">wmiApSrv</span>
<span id="t69" class="t" style="left:456.20px;top:686.93px;transform:scaleX(1.0041);">WMI Performance Adapter</span>
<span id="t70" class="t" style="left:872.90px;top:686.93px;transform:scaleX(0.9988);">Stopped</span>
<span id="t71" class="t" style="left:42.40px;top:723.63px;transform:scaleX(0.9955);">WMPNetworkSvc</span>
<span id="t72" class="t" style="left:456.20px;top:723.63px;transform:scaleX(0.9866);">Windows Media Player Network Sha...</span>
<span id="t73" class="t" style="left:872.90px;top:723.63px;transform:scaleX(0.9988);">Stopped</span>
<span id="t74" class="t" style="left:42.40px;top:760.33px;transform:scaleX(0.9618);">WPDBusEnum</span>
<span id="t75" class="t" style="left:456.20px;top:760.33px;transform:scaleX(0.9725);">Portable Device Enumerator Service</span>
<span id="t76" class="t" style="left:872.90px;top:760.33px;transform:scaleX(0.9988);">Stopped</span>
<span id="t77" class="t" style="left:1066.50px;top:760.33px;transform:scaleX(0.9776);">LocalSystemN...</span>
<span id="t78" class="t" style="left:42.40px;top:797.03px;transform:scaleX(0.9683);">WpnService</span>
<span id="t79" class="t" style="left:359.30px;top:797.03px;transform:scaleX(0.9140);">2580</span>
<span id="t80" class="t" style="left:456.20px;top:797.03px;transform:scaleX(0.9974);">Windows Push Notifications System ...</span>
<span id="t81" class="t" style="left:872.90px;top:797.03px;transform:scaleX(1.0226);">Running</span>
<span id="t82" class="t" style="left:1066.50px;top:797.03px;transform:scaleX(0.9636);">netsvcs</span>
<span id="t83" class="t" style="left:42.40px;top:833.73px;transform:scaleX(0.9523);">WpnUserService</span>
<span id="t84" class="t" style="left:456.20px;top:833.73px;transform:scaleX(0.9841);">Windows Push Notifications User Se...</span>
<span id="t85" class="t" style="left:872.90px;top:833.73px;transform:scaleX(0.9988);">Stopped</span>
<span id="t86" class="t" style="left:1066.50px;top:833.73px;transform:scaleX(0.9613);">UnistackSvcGr...</span>
<span id="t87" class="t" style="left:42.40px;top:870.43px;transform:scaleX(0.9391);">WpnUserService_10b036</span>
<span id="t88" class="t" style="left:359.30px;top:870.43px;transform:scaleX(0.9140);">2128</span>
<span id="t89" class="t" style="left:456.20px;top:870.43px;transform:scaleX(0.9841);">Windows Push Notifications User Se...</span>
<span id="t90" class="t" style="left:872.90px;top:870.43px;transform:scaleX(1.0226);">Running</span>
<span id="t91" class="t" style="left:1066.50px;top:870.43px;transform:scaleX(0.9613);">UnistackSvcGr...</span>
<span id="t92" class="t" style="left:42.40px;top:907.13px;transform:scaleX(0.9505);">WSearch</span>
<span id="t93" class="t" style="left:456.20px;top:907.13px;transform:scaleX(0.9737);">Windows Search</span>
<span id="t94" class="t" style="left:872.90px;top:907.13px;transform:scaleX(0.9988);">Stopped</span>
<span id="t95" class="t" style="left:42.40px;top:943.83px;transform:scaleX(0.9888);">wuauserv</span>
<span id="t96" class="t" style="left:456.20px;top:943.83px;transform:scaleX(1.0012);">Windows Update</span>
<span id="t97" class="t" style="left:872.90px;top:943.83px;transform:scaleX(0.9988);">Stopped</span>
<span id="t98" class="t" style="left:1066.50px;top:943.83px;transform:scaleX(0.9636);">netsvcs</span>
<span id="t99" class="t" style="left:62.56px;top:1020.93px;transform:scaleX(0.9701);">Fewer details</span>
<span id="t100" class="t blue" style="left:267.58px;top:1020.93px;transform:scaleX(0.9581);">Open Services</span>
<svg id="arrow" class="abs" style="left:0;top:0" width="1278" height="1079" viewBox="0 0 1278 1079">
<path d="M1169.6,401.9 Q1110.8,450.9 1022,468.4" fill="none" stroke="#d23a1e" stroke-width="5.8" stroke-linecap="butt"/>
<path d="M996,473.4 L1023.7,455.1 L1027,485.1 Z" fill="#d23a1e"/>
</svg>
<svg id="cursor" class="abs" style="left:210px;top:945px" width="40" height="50" viewBox="0 0 40 50">
<defs><filter id="sh" x="-50%" y="-50%" width="200%" height="200%"><feGaussianBlur stdDeviation="2"/></filter></defs>
<path d="M9.5,9.5 L9.5,41 L16,33.5 L22,43.5 L26.5,41.5 L21.5,31.5 L30.5,31 Z" fill="#000" opacity="0.25" filter="url(#sh)" transform="translate(2,2)"/>
<path d="M7.2,7.2 L7.7,38.8 L15,32.2 L20.6,42.2 L24.7,40.6 L20.3,31.1 L28.9,30 Z" fill="#fff" stroke="#262626" stroke-width="2" stroke-linejoin="round"/>
</svg>
</div><svg width="0" height="0" style="position:absolute"><filter id="soft" x="0" y="0" width="100%" height="100%"><feConvolveMatrix order="3" kernelMatrix="0.02768 0.11101 0.02768 0.11101 0.44521 0.11101 0.02768 0.11101 0.02768" divisor="1" edgeMode="duplicate" preserveAlpha="false"/></filter></svg></body></html>
